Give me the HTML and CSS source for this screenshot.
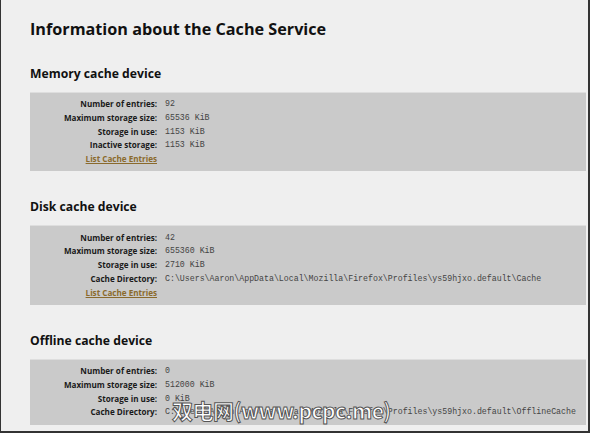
FILE: index.html
```html
<!DOCTYPE html>
<html lang="en">
<head>
    <meta charset="UTF-8">
    <title>Information about the Cache Service</title>
    <link rel="stylesheet" href="styles.css">
</head>
<body>

<div class="frame">
    <h1>Information about the Cache Service</h1>

    <!-- Memory -->
    <h2>Memory cache device</h2>
    <div class="device">
        <span class="label">Number of entries:</span><span class="value">92</span>
        <span class="label">Maximum storage size:</span><span class="value">65536 KiB</span>
        <span class="label">Storage in use:</span><span class="value">1153 KiB</span>
        <span class="label">Inactive storage:</span><span class="value">1153 KiB</span>
        <a class="label link" href="#">List Cache Entries</a><span class="value"></span>
    </div>

    <!-- Disk -->
    <h2>Disk cache device</h2>
    <div class="device">
        <span class="label">Number of entries:</span><span class="value">42</span>
        <span class="label">Maximum storage size:</span><span class="value">655360 KiB</span>
        <span class="label">Storage in use:</span><span class="value">2710 KiB</span>
        <span class="label">Cache Directory:</span><span class="value">C:\Users\Aaron\AppData\Local\Mozilla\Firefox\Profiles\ys59hjxo.default\Cache</span>
        <a class="label link" href="#">List Cache Entries</a><span class="value"></span>
    </div>

    <!-- Offline -->
    <h2>Offline cache device</h2>
    <div class="device">
        <span class="label">Number of entries:</span><span class="value">0</span>
        <span class="label">Maximum storage size:</span><span class="value">512000 KiB</span>
        <span class="label">Storage in use:</span><span class="value">0 KiB</span>
        <span class="label">Cache Directory:</span><span class="value">C:\Users\Aaron\AppData\Local\Mozilla\Firefox\Profiles\ys59hjxo.default\OfflineCache</span>
    </div>

    <div class="watermark">双电网(www.pcpc.me)</div>
</div>

</body>
</html>
```

FILE: styles.css
```css
* {
    margin: 0;
    padding: 0;
    box-sizing: border-box;
}
body {
    width: 590px;
    height: 433px;
    overflow: hidden;
    background: #333;
    font-family: "Open Sans", Arial, sans-serif;
    color: #111;
}
.frame {
    position: relative;
    height: 431px;
    margin-left: 1px;
    margin-right: 2px;
    padding: 17px 0 0 29px;
    background: #efefef;
    overflow: hidden;
}
h1 {
    font-size: 16.2px;
    font-weight: 700;
    line-height: 24px;
    margin-bottom: 24px;
}
h2 {
    font-size: 12.2px;
    font-weight: 700;
    line-height: 18px;
    margin-bottom: 9px;
}
.device {
    display: grid;
    grid-template-columns: 127px 1fr;
    column-gap: 8px;
    grid-auto-rows: 13.7px;
    align-items: center;
    margin-right: 2px;
    padding: 4px 0 6px;
    margin-bottom: 27px;
    background: #cacaca;
    border-top: 1px solid #dedede;
}
.label {
    text-align: right;
    font-size: 8.1px;
    font-weight: 700;
    color: #1a1a1a;
    white-space: nowrap;
}
.value {
    font-family: "Liberation Mono", "Courier New", monospace;
    font-size: 8.25px;
    color: #444;
    white-space: nowrap;
}
.link {
    color: #8a6a2c;
    text-decoration: underline;
}
.watermark {
    position: absolute;
    left: 171px;
    top: 395px;
    font-family: "Noto Sans CJK SC", "Noto Sans", sans-serif;
    font-size: 21px;
    font-weight: 700;
    color: #fff;
    -webkit-text-stroke: 1px #555;
    letter-spacing: -0.5px;
}
```
